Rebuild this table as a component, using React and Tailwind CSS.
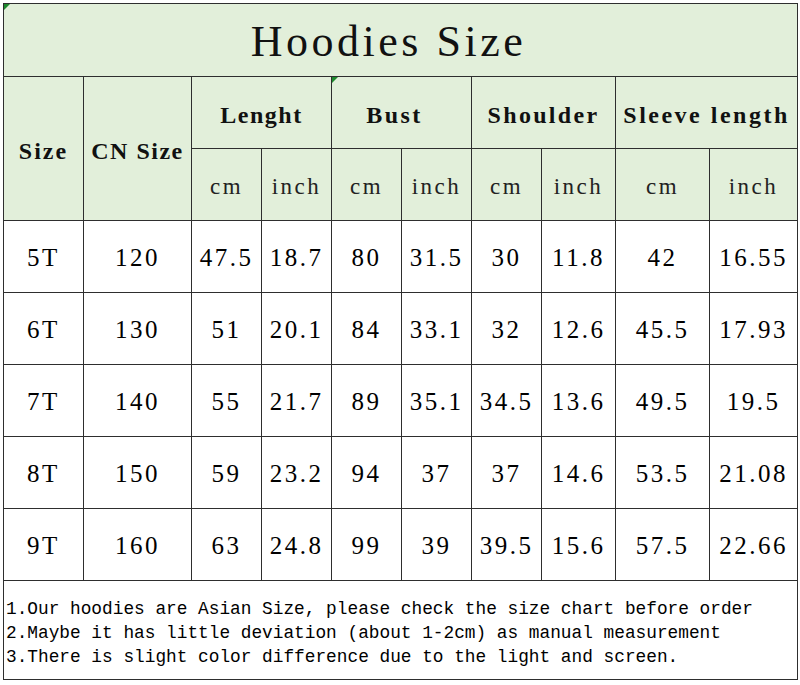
import React from "react";

const rows = [
  ["5T", "120", "47.5", "18.7", "80", "31.5", "30", "11.8", "42", "16.55"],
  ["6T", "130", "51", "20.1", "84", "33.1", "32", "12.6", "45.5", "17.93"],
  ["7T", "140", "55", "21.7", "89", "35.1", "34.5", "13.6", "49.5", "19.5"],
  ["8T", "150", "59", "23.2", "94", "37", "37", "14.6", "53.5", "21.08"],
  ["9T", "160", "63", "24.8", "99", "39", "39.5", "15.6", "57.5", "22.66"],
];

const widths = [80, 108, 70, 70, 70, 70, 70, 74, 94, 88];

const serif = { fontFamily: '"Liberation Serif", "Noto Sans CJK SC", serif' };

export default function App() {
  const cell = "border border-[#2e2e2e] text-center align-middle p-0";
  return (
    <div className="w-[800px] h-[685px] bg-white pt-[3px] pl-[3px]" style={serif}>
      <table className="table-fixed border-collapse w-[794px] text-[#111]">
        <colgroup>
          {widths.map((w, i) => (
            <col key={i} style={{ width: w }} />
          ))}
        </colgroup>
        <tbody>
          {/* Title */}
          <tr className="h-[73px] bg-[#e2efda]">
            <td colSpan={10} className={`${cell} relative pt-[4px]`}>
              <span className="absolute left-0 top-0 w-0 h-0 border-t-[6px] border-r-[6px] border-t-[#1e8a2e] border-r-transparent" />
              <span className="text-[44px] tracking-[3.5px] pr-6 leading-none">Hoodies Size</span>
            </td>
          </tr>

          {/* Header */}
          <tr className="h-[72px] bg-[#e2efda] text-[24px] font-bold tracking-[1.5px]">
            <td rowSpan={2} className={`${cell} tracking-[2px] pt-[4px]`}>Size</td>
            <td rowSpan={2} className={`${cell} whitespace-nowrap pt-[4px]`}>CN Size</td>
            <td colSpan={2} className={`${cell} pt-[4px]`}>Lenght</td>
            <td colSpan={2} className={`${cell} relative pt-[4px]`}>
              <span className="absolute left-0 top-0 w-0 h-0 border-t-[6px] border-r-[6px] border-t-[#1e8a2e] border-r-transparent" />
              <span className="pr-[14px] tracking-[2.5px]">Bust</span>
            </td>
            <td colSpan={2} className={`${cell} tracking-[2.3px] pt-[4px]`}>Shoulder</td>
            <td colSpan={2} className={`${cell} whitespace-nowrap tracking-[2.5px] pt-[4px]`}>Sleeve length</td>
          </tr>
          <tr className="h-[72px] bg-[#e2efda] text-[23px] tracking-[2.5px] text-[#222]">
            {["cm", "inch", "cm", "inch", "cm", "inch", "cm", "inch"].map((t, i) => (
              <td key={i} className={`${cell} pt-[6px]`}>{t}</td>
            ))}
          </tr>

          {/* Data */}
          {rows.map((r, i) => (
            <tr key={i} className="h-[72px] text-[25px] tracking-[2.5px] text-black">
              {r.map((v, j) => (
                <td key={j} className={`${cell} whitespace-nowrap pt-[3px]`}>{v}</td>
              ))}
            </tr>
          ))}

          {/* Notes */}
          <tr className="h-[99px]">
            <td
              colSpan={10}
              className="border border-[#2e2e2e] text-left align-middle pl-[2px] pt-[6px] text-[17.8px] leading-[24px] text-black whitespace-nowrap"
              style={{ fontFamily: '"Liberation Mono", "Noto Sans CJK SC", monospace' }}
            >
              <div>1.Our hoodies are Asian Size, please check the size chart before order</div>
              <div>2.Maybe it has little deviation (about 1-2cm) as manual measurement</div>
              <div>3.There is slight color difference due to the light and screen.</div>
            </td>
          </tr>
        </tbody>
      </table>
    </div>
  );
}
